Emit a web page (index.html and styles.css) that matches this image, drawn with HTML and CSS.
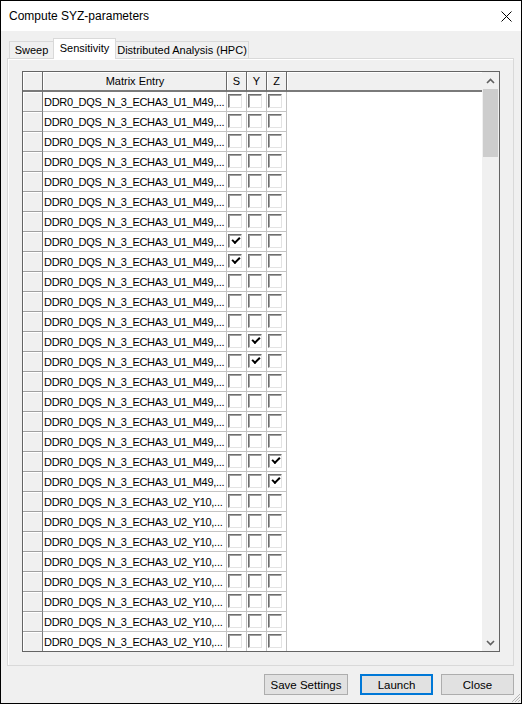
FILE: index.html
```html
<!doctype html>
<html lang="en">
  <head>
    <meta charset="UTF-8" />
    <title>Compute SYZ-parameters</title>
    <link rel="stylesheet" href="styles.css">
  </head>
  <body>
    <div class="window">
      <div class="titlebar">
        <span class="title">Compute SYZ-parameters</span>
        <svg class="close" width="11" height="11" viewBox="0 0 11 11">
          <path d="M0.5 0.5 L10.5 10.5 M10.5 0.5 L0.5 10.5" stroke="#000" stroke-width="1" />
        </svg>
      </div>
      <div class="content">
        <div class="tabs">
          <div class="tab sweep">Sweep</div>
          <div class="tab active">Sensitivity</div>
          <div class="tab hpc">Distributed Analysis (HPC)</div>
        </div>
        <div class="panel">
          <div class="grid">
            <div class="table">
              <div class="row head">
                <div class="rh"></div>
                <div class="hc name">Matrix Entry</div>
                <div class="hc c">S</div>
                <div class="hc c">Y</div>
                <div class="hc c">Z</div>
                <div class="hc fill"></div>
              </div>
              <!-- U1 entries -->
              <div class="row"><div class="rh"></div><div class="cell name">DDR0_DQS_N_3_ECHA3_U1_M49,...</div><div class="cell c"><span class="cb"></span></div><div class="cell c"><span class="cb"></span></div><div class="cell c"><span class="cb"></span></div><div class="fill"></div></div>
              <div class="row"><div class="rh"></div><div class="cell name">DDR0_DQS_N_3_ECHA3_U1_M49,...</div><div class="cell c"><span class="cb"></span></div><div class="cell c"><span class="cb"></span></div><div class="cell c"><span class="cb"></span></div><div class="fill"></div></div>
              <div class="row"><div class="rh"></div><div class="cell name">DDR0_DQS_N_3_ECHA3_U1_M49,...</div><div class="cell c"><span class="cb"></span></div><div class="cell c"><span class="cb"></span></div><div class="cell c"><span class="cb"></span></div><div class="fill"></div></div>
              <div class="row"><div class="rh"></div><div class="cell name">DDR0_DQS_N_3_ECHA3_U1_M49,...</div><div class="cell c"><span class="cb"></span></div><div class="cell c"><span class="cb"></span></div><div class="cell c"><span class="cb"></span></div><div class="fill"></div></div>
              <div class="row"><div class="rh"></div><div class="cell name">DDR0_DQS_N_3_ECHA3_U1_M49,...</div><div class="cell c"><span class="cb"></span></div><div class="cell c"><span class="cb"></span></div><div class="cell c"><span class="cb"></span></div><div class="fill"></div></div>
              <div class="row"><div class="rh"></div><div class="cell name">DDR0_DQS_N_3_ECHA3_U1_M49,...</div><div class="cell c"><span class="cb"></span></div><div class="cell c"><span class="cb"></span></div><div class="cell c"><span class="cb"></span></div><div class="fill"></div></div>
              <div class="row"><div class="rh"></div><div class="cell name">DDR0_DQS_N_3_ECHA3_U1_M49,...</div><div class="cell c"><span class="cb"></span></div><div class="cell c"><span class="cb"></span></div><div class="cell c"><span class="cb"></span></div><div class="fill"></div></div>
              <div class="row"><div class="rh"></div><div class="cell name">DDR0_DQS_N_3_ECHA3_U1_M49,...</div><div class="cell c"><span class="cb on"></span></div><div class="cell c"><span class="cb"></span></div><div class="cell c"><span class="cb"></span></div><div class="fill"></div></div>
              <div class="row"><div class="rh"></div><div class="cell name">DDR0_DQS_N_3_ECHA3_U1_M49,...</div><div class="cell c"><span class="cb on"></span></div><div class="cell c"><span class="cb"></span></div><div class="cell c"><span class="cb"></span></div><div class="fill"></div></div>
              <div class="row"><div class="rh"></div><div class="cell name">DDR0_DQS_N_3_ECHA3_U1_M49,...</div><div class="cell c"><span class="cb"></span></div><div class="cell c"><span class="cb"></span></div><div class="cell c"><span class="cb"></span></div><div class="fill"></div></div>
              <div class="row"><div class="rh"></div><div class="cell name">DDR0_DQS_N_3_ECHA3_U1_M49,...</div><div class="cell c"><span class="cb"></span></div><div class="cell c"><span class="cb"></span></div><div class="cell c"><span class="cb"></span></div><div class="fill"></div></div>
              <div class="row"><div class="rh"></div><div class="cell name">DDR0_DQS_N_3_ECHA3_U1_M49,...</div><div class="cell c"><span class="cb"></span></div><div class="cell c"><span class="cb"></span></div><div class="cell c"><span class="cb"></span></div><div class="fill"></div></div>
              <div class="row"><div class="rh"></div><div class="cell name">DDR0_DQS_N_3_ECHA3_U1_M49,...</div><div class="cell c"><span class="cb"></span></div><div class="cell c"><span class="cb on"></span></div><div class="cell c"><span class="cb"></span></div><div class="fill"></div></div>
              <div class="row"><div class="rh"></div><div class="cell name">DDR0_DQS_N_3_ECHA3_U1_M49,...</div><div class="cell c"><span class="cb"></span></div><div class="cell c"><span class="cb on"></span></div><div class="cell c"><span class="cb"></span></div><div class="fill"></div></div>
              <div class="row"><div class="rh"></div><div class="cell name">DDR0_DQS_N_3_ECHA3_U1_M49,...</div><div class="cell c"><span class="cb"></span></div><div class="cell c"><span class="cb"></span></div><div class="cell c"><span class="cb"></span></div><div class="fill"></div></div>
              <div class="row"><div class="rh"></div><div class="cell name">DDR0_DQS_N_3_ECHA3_U1_M49,...</div><div class="cell c"><span class="cb"></span></div><div class="cell c"><span class="cb"></span></div><div class="cell c"><span class="cb"></span></div><div class="fill"></div></div>
              <div class="row"><div class="rh"></div><div class="cell name">DDR0_DQS_N_3_ECHA3_U1_M49,...</div><div class="cell c"><span class="cb"></span></div><div class="cell c"><span class="cb"></span></div><div class="cell c"><span class="cb"></span></div><div class="fill"></div></div>
              <div class="row"><div class="rh"></div><div class="cell name">DDR0_DQS_N_3_ECHA3_U1_M49,...</div><div class="cell c"><span class="cb"></span></div><div class="cell c"><span class="cb"></span></div><div class="cell c"><span class="cb"></span></div><div class="fill"></div></div>
              <div class="row"><div class="rh"></div><div class="cell name">DDR0_DQS_N_3_ECHA3_U1_M49,...</div><div class="cell c"><span class="cb"></span></div><div class="cell c"><span class="cb"></span></div><div class="cell c"><span class="cb on"></span></div><div class="fill"></div></div>
              <div class="row"><div class="rh"></div><div class="cell name">DDR0_DQS_N_3_ECHA3_U1_M49,...</div><div class="cell c"><span class="cb"></span></div><div class="cell c"><span class="cb"></span></div><div class="cell c"><span class="cb on"></span></div><div class="fill"></div></div>
              <!-- U2 entries -->
              <div class="row"><div class="rh"></div><div class="cell name">DDR0_DQS_N_3_ECHA3_U2_Y10,...</div><div class="cell c"><span class="cb"></span></div><div class="cell c"><span class="cb"></span></div><div class="cell c"><span class="cb"></span></div><div class="fill"></div></div>
              <div class="row"><div class="rh"></div><div class="cell name">DDR0_DQS_N_3_ECHA3_U2_Y10,...</div><div class="cell c"><span class="cb"></span></div><div class="cell c"><span class="cb"></span></div><div class="cell c"><span class="cb"></span></div><div class="fill"></div></div>
              <div class="row"><div class="rh"></div><div class="cell name">DDR0_DQS_N_3_ECHA3_U2_Y10,...</div><div class="cell c"><span class="cb"></span></div><div class="cell c"><span class="cb"></span></div><div class="cell c"><span class="cb"></span></div><div class="fill"></div></div>
              <div class="row"><div class="rh"></div><div class="cell name">DDR0_DQS_N_3_ECHA3_U2_Y10,...</div><div class="cell c"><span class="cb"></span></div><div class="cell c"><span class="cb"></span></div><div class="cell c"><span class="cb"></span></div><div class="fill"></div></div>
              <div class="row"><div class="rh"></div><div class="cell name">DDR0_DQS_N_3_ECHA3_U2_Y10,...</div><div class="cell c"><span class="cb"></span></div><div class="cell c"><span class="cb"></span></div><div class="cell c"><span class="cb"></span></div><div class="fill"></div></div>
              <div class="row"><div class="rh"></div><div class="cell name">DDR0_DQS_N_3_ECHA3_U2_Y10,...</div><div class="cell c"><span class="cb"></span></div><div class="cell c"><span class="cb"></span></div><div class="cell c"><span class="cb"></span></div><div class="fill"></div></div>
              <div class="row"><div class="rh"></div><div class="cell name">DDR0_DQS_N_3_ECHA3_U2_Y10,...</div><div class="cell c"><span class="cb"></span></div><div class="cell c"><span class="cb"></span></div><div class="cell c"><span class="cb"></span></div><div class="fill"></div></div>
              <div class="row"><div class="rh"></div><div class="cell name">DDR0_DQS_N_3_ECHA3_U2_Y10,...</div><div class="cell c"><span class="cb"></span></div><div class="cell c"><span class="cb"></span></div><div class="cell c"><span class="cb"></span></div><div class="fill"></div></div>
            </div>
            <div class="vscroll">
              <div class="arrow">
                <svg width="9" height="6" viewBox="0 0 9 6"><path d="M1 5 L4.5 1.5 L8 5" fill="none" stroke="#606060" stroke-width="1.6" /></svg>
              </div>
              <div class="thumb"></div>
              <div class="track"></div>
              <div class="arrow">
                <svg width="9" height="6" viewBox="0 0 9 6"><path d="M1 1 L4.5 4.5 L8 1" fill="none" stroke="#606060" stroke-width="1.6" /></svg>
              </div>
            </div>
          </div>
        </div>
        <div class="buttons">
          <button class="btn save">Save Settings</button>
          <button class="btn default">Launch</button>
          <button class="btn">Close</button>
        </div>
      </div>
      <svg class="grip" width="11" height="11" viewBox="0 0 11 11">
        <path d="M10 2 L2 10 M10 5 L5 10 M10 8 L8 10" stroke="#b4b4b4" stroke-width="1" />
      </svg>
    </div>
  </body>
</html>
```

FILE: styles.css
```css
* {
  margin: 0;
  padding: 0;
  box-sizing: border-box;
}
body {
  width: 522px;
  height: 704px;
  overflow: hidden;
  background-color: #f0f0f0;
  color: #000;
  font-family: "Liberation Sans", Arial, sans-serif;
  font-size: 11px;
}
.window {
  position: relative;
  width: 522px;
  height: 704px;
  border: 1px solid #000;
  background-color: #f0f0f0;
  display: flex;
  flex-direction: column;
}
.titlebar {
  height: 30px;
  display: flex;
  align-items: center;
  padding-left: 8px;
  background-color: #fff;
  font-size: 12px;
}
.titlebar .close {
  margin-left: auto;
  margin-right: 9px;
}
.content {
  padding: 7px 7px 0 6px;
}
/* tabs */
.tabs {
  display: flex;
  align-items: flex-end;
  height: 20px;
  padding-left: 2px;
  position: relative;
  z-index: 1;
}
.tab {
  height: 17px;
  display: flex;
  align-items: center;
  justify-content: center;
  border: 1px solid #d9d9d9;
  border-bottom: none;
  background-color: #f0f0f0;
}
.tab.sweep {
  width: 44px;
  border-right: none;
}
.tab.hpc {
  width: 133px;
  border-left: none;
}
.tab.active {
  width: 63px;
  height: 21px;
  margin-bottom: -1px;
  padding-bottom: 3px;
  background-color: #fff;
}
.panel {
  height: 608px;
  border: 1px solid #d9d9d9;
  box-shadow: inset 1px 1px #fff;
  padding: 12px 0 0 14px;
}
/* grid */
.grid {
  width: 478px;
  height: 581px;
  display: flex;
  border: 1px solid #646464;
  background-color: #fff;
  overflow: hidden;
}
.table {
  width: 459px;
  overflow: hidden;
}
.row {
  display: flex;
  height: 20px;
}
.rh {
  width: 20px;
  flex: none;
  background-color: #f0f0f0;
  border-right: 1px solid #7a7a7a;
  border-bottom: 1px solid #a0a0a0;
  box-shadow: inset 1px 1px #fff;
}
.cell {
  border-right: 1px solid #c4c4c4;
  border-bottom: 1px solid #c4c4c4;
}
.name {
  width: 184px;
  flex: none;
  display: flex;
  align-items: center;
  padding-left: 1px;
  letter-spacing: -0.3px;
  white-space: nowrap;
  overflow: hidden;
}
.c {
  width: 20px;
  flex: none;
  padding: 2px 0 0 1px;
}
.fill {
  flex: 1;
}
.head .rh,
.hc {
  background-color: #f0f0f0;
  border-right: 1px solid #696969;
  border-bottom: 2px solid #7a7a7a;
  box-shadow: inset 1px 1px #fff;
}
.head .name {
  justify-content: center;
  letter-spacing: 0;
}
.head .c {
  padding: 0;
  display: flex;
  align-items: center;
  justify-content: center;
}
.head .fill {
  border-right: none;
}
.cb {
  display: block;
  position: relative;
  width: 14px;
  height: 14px;
  background-color: #fff;
  border: 1px solid;
  border-color: #6e6e6e #e3e3e3 #e3e3e3 #6e6e6e;
  box-shadow: inset 1px 1px #a0a0a0;
}
.cb.on::after {
  content: "";
  position: absolute;
  left: 3px;
  top: 2px;
  width: 6px;
  height: 3px;
  border-left: 2px solid #000;
  border-bottom: 2px solid #000;
  transform: rotate(-45deg);
}
/* scrollbar */
.vscroll {
  width: 17px;
  display: flex;
  flex-direction: column;
  background-color: #f0f0f0;
}
.vscroll .arrow {
  height: 17px;
  display: flex;
  align-items: center;
  justify-content: center;
}
.vscroll .thumb {
  height: 68px;
  margin: 0 1px;
  background-color: #cdcdcd;
}
.vscroll .track {
  flex: 1;
}
/* buttons */
.buttons {
  display: flex;
  justify-content: flex-end;
  gap: 8px;
  padding-top: 8px;
}
.btn {
  width: 73px;
  height: 21px;
  font-family: "Liberation Sans", Arial, sans-serif;
  font-size: 11.5px;
  color: #000;
  background-color: #e1e1e1;
  border: 1px solid #adadad;
}
.btn.save {
  width: 84px;
  margin-right: 4px;
}
.btn.default {
  border: 2px solid #0078d7;
}
.grip {
  position: absolute;
  right: 0;
  bottom: 0;
}
```
